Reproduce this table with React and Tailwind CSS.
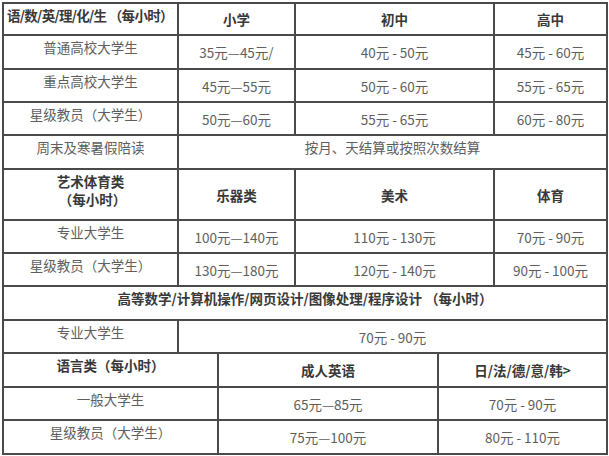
const cjk = "font-['Noto_Sans_CJK_SC','Noto_Sans',sans-serif]"

// first-column style: top aligned, centered text
function Label({ children, bold, left, className = '' }) {
  return (
    <div
      className={`bg-white pt-[2px] leading-[18px] ${left ? 'text-left pl-[3px]' : 'text-center'} ${
        bold ? 'font-bold text-[#383838]' : 'text-[#5e5e5e]'
      } ${className}`}
    >
      {children}
    </div>
  )
}

// value cell: vertically centered
function Cell({ children, bold, className = '' }) {
  return (
    <div
      className={`bg-white flex items-center justify-center leading-[18px] ${
        bold ? 'font-bold text-[#383838]' : 'text-[#5e5e5e]'
      } ${className}`}
    >
      {children}
    </div>
  )
}

const cols4 = 'grid grid-cols-[173px_115px_197px_111px] gap-[2px]'

export default function App() {
  return (
    <div className={`w-[609px] h-[456px] bg-white ${cjk} text-[13.5px]`}>
      <div className="ml-[2px] mt-[2px] w-[606px] bg-[#4a4a4a] p-[2px] flex flex-col gap-[2px]">
        {/* 语数英理化生 */}
        <div className={`${cols4} grid-rows-[30px_32px_31px_31px_32px]`}>
          <Label bold left className="pt-0 whitespace-nowrap tracking-[-0.7px]">
            语/数/英/理/化/生 （每小时）
          </Label>
          <Cell bold>小学</Cell>
          <Cell bold>初中</Cell>
          <Cell bold>高中</Cell>

          <Label>普通高校大学生</Label>
          <Cell>35元—45元/</Cell>
          <Cell>40元 - 50元</Cell>
          <Cell>45元 - 60元</Cell>

          <Label>重点高校大学生</Label>
          <Cell>45元—55元</Cell>
          <Cell>50元 - 60元</Cell>
          <Cell>55元 - 65元</Cell>

          <Label className="pt-0">星级教员（大学生）</Label>
          <Cell>50元—60元</Cell>
          <Cell>55元 - 65元</Cell>
          <Cell>60元 - 80元</Cell>

          <Label>周末及寒暑假陪读</Label>
          <Label className="col-span-3">按月、天结算或按照次数结算</Label>
        </div>

        {/* 艺术体育类 */}
        <div className={`${cols4} grid-rows-[49px_31px_31px]`}>
          <Label bold className="pt-0">
            <div>艺术体育类</div>
            <div className="pl-[4px]">（每小时）</div>
          </Label>
          <Cell bold>乐器类</Cell>
          <Cell bold>美术</Cell>
          <Cell bold>体育</Cell>

          <Label>专业大学生</Label>
          <Cell>100元—140元</Cell>
          <Cell>110元 - 130元</Cell>
          <Cell>70元 - 90元</Cell>

          <Label>星级教员（大学生）</Label>
          <Cell>130元—180元</Cell>
          <Cell>120元 - 140元</Cell>
          <Cell>90元 - 100元</Cell>
        </div>

        {/* 高等数学 */}
        <div className={`${cols4} grid-rows-[32px_31px]`}>
          <Label bold className="col-span-4">
            高等数学/计算机操作/网页设计/图像处理/程序设计 （每小时）
          </Label>
          <Label>专业大学生</Label>
          <Cell className="col-span-3">70元 - 90元</Cell>
        </div>

        {/* 语言类 */}
        <div className="grid grid-cols-[213px_218px_167px] grid-rows-[32px_31px_32px] gap-[2px]">
          <Label bold>语言类（每小时）</Label>
          <Cell bold>成人英语</Cell>
          <Cell bold>日/法/德/意/韩&gt;</Cell>

          <Label>一般大学生</Label>
          <Cell>65元—85元</Cell>
          <Cell>70元 - 90元</Cell>

          <Label>星级教员（大学生）</Label>
          <Cell>75元—100元</Cell>
          <Cell>80元 - 110元</Cell>
        </div>
      </div>
    </div>
  )
}
